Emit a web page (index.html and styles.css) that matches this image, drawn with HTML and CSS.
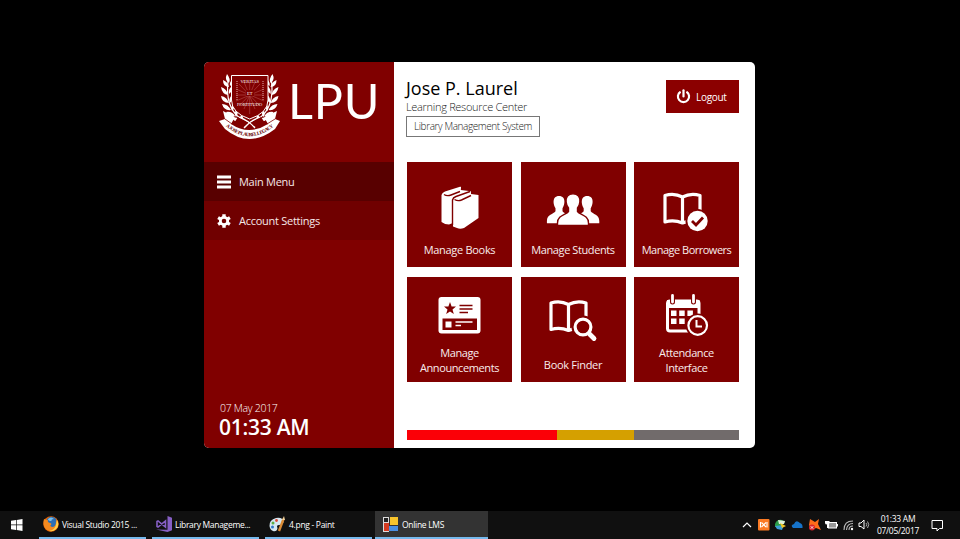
FILE: index.html
```html
<!DOCTYPE html>
<html lang="en">
<head>
<meta charset="utf-8">
<title>Online LMS</title>
<link rel="stylesheet" href="styles.css">
</head>
<body>
<main class="desktop">
  <div class="window">
    <aside class="sidebar">
      <div class="brand">
        <svg class="crest" viewBox="0 0 64 68" width="64" height="68">
          <defs>
            <path id="motto" d="M7 54.500Q31 76 57 54.500"/>
            <g id="branch" fill="#fff">
              <path d="M9 3Q13 8 11 12Q6 9 9 3ZM5 9Q10 11 11 16Q5 16 5 9ZM15 8Q16 12 12 15Q11 11 15 8ZM3 16Q9 18 10 24Q4 23 3 16ZM14 15Q16 19 11 23Q10 18 14 15ZM3 25Q9 26 11 32Q4 32 3 25ZM14 24Q16 28 12 32Q10 28 14 24ZM4 33Q10 33 13 39Q6 40 4 33ZM16 32Q18 36 14 40Q12 36 16 32ZM8 41Q14 40 17 45Q11 47 8 41ZM19 38Q21 42 18 46Q15 42 19 38ZM14 47Q20 45 23 50Q17 52 14 47ZM24 43Q26 47 24 51Q20 47 24 43Z"/>
              <path d="M10 10Q7 36 22 47Q30 50 37 56" fill="none" stroke="#fff" stroke-width="1.200"/>
            </g>
          </defs>
          <use href="#branch"/>
          <use href="#branch" transform="matrix(-1 0 0 1 63.500 0)"/>
          <path d="M13.500 4.500H50V29Q50 42 31.700 48Q13.500 42 13.500 29Z" fill="#800000" stroke="#fff"/>
          <path d="M31.700 11V43M18 24H46M21 13L42 35M42 13L21 35M26 11L37 38M37 11L26 38M18 18L46 30M46 18L18 30" stroke="#c77" stroke-width=".4"/>
          <path d="M19 10V30M45 10V30" stroke="#daa" stroke-dasharray="1 1"/>
          <rect x="28" y="19" width="8" height="6" fill="#800000"/>
          <g class="crest-words">
            <text x="31.700" y="12">VERITAS</text>
            <text x="31.700" y="24">ET</text>
            <text x="31.700" y="35">FORTITUDO</text>
          </g>
          <path d="M5 40L17 46L13 53Q31 65 50 53L46 46L59 40L57 48L62 50L57 58Q31 78 7 58L1 50L7 48Z" fill="#fff"/>
          <path d="M16 52Q31 60 47 52L43 46L31 52L20 46Z" fill="#800000"/>
          <path d="M21 46Q30 49 37 57M42 46Q33 49 26 57" fill="none" stroke="#fff" stroke-width="1.300"/>
          <path d="M7 48L14 53M57 48L49 53" stroke="#800000" stroke-width=".8"/>
          <text class="motto"><textPath href="#motto" startOffset="1" textLength="53">A JOSE P LAUREL LEGACY</textPath></text>
        </svg>
        <span class="brand-name">LPU</span>
      </div>
      <nav class="menu">
        <a class="menu-item active">
          <svg width="14" height="14" viewBox="0 0 14 14"><path d="M1 2H13M1 7H13M1 12H13" stroke="#fff" stroke-width="3" stroke-linecap="square"/></svg>
          <span>Main Menu</span>
        </a>
        <a class="menu-item">
          <svg width="14" height="14" viewBox="0 0 14 14"><g stroke="#fff"><path d="M7 .2V13.800M1.100 3.600L12.900 10.400M1.100 10.400L12.900 3.600" stroke-width="3.400"/><circle cx="7" cy="7" r="3.700" fill="#700000" stroke-width="2.800"/></g></svg>
          <span>Account Settings</span>
        </a>
      </nav>
      <div class="clock">
        <div class="date">07 May 2017</div>
        <div class="time">01:33 AM</div>
      </div>
    </aside>
    <section class="content">
      <header class="header">
        <div class="titles">
          <h1>Jose P. Laurel</h1>
          <h2>Learning Resource Center</h2>
          <div class="system"><span>Library Management System</span></div>
        </div>
        <a class="logout">
          <svg width="15" height="15" viewBox="0 0 15 15"><g fill="none" stroke="#fff" stroke-width="2.200"><path d="M4.600 2.700A5.600 5.600 0 1 0 10.400 2.700"/><path d="M7.500 1.300V7.500" stroke-linecap="round"/></g></svg>
          <span>Logout</span>
        </a>
      </header>
      <div class="tiles">
        <a class="tile">
          <svg viewBox="0 0 106 74" width="106" height="74">
            <path d="M34.500 33Q35 30.500 38 29.500L53 24.800Q54.500 24.500 54 26L53.800 28L62 29Q64.500 28.500 64 30.500L64 32L71.500 33V56L57 66Q53 67.500 50 66L46 64.500V61L42 62.500Q38 62.500 34.500 60Z" fill="#fff"/>
            <path d="M37 32.500Q40 34.500 44 33L53 29.500M47.500 37.500Q51 39.500 54.500 38L64 33.500M45.500 63V38Q46 35.500 49 34.500L63 29.500" fill="none" stroke="#800000" stroke-width="1.400"/>
          </svg>
          <span class="t-books">Manage Books</span>
        </a>
        <a class="tile">
          <svg viewBox="0 0 106 74" width="106" height="74">
            <defs><path id="person" d="M-4.500 13C-7 10 -8 4 -5.500 1C-3-2 3-2 5.500 1C8 4 7 10 4.500 13V16.500C7 20 15.500 20 15.500 28V30.500H-15.500V28C-15.500 20 -7 20 -4.500 16.500Z"/></defs>
            <use href="#person" fill="#fff" transform="translate(39 35) scale(.78 .86)"/>
            <use href="#person" fill="#fff" transform="translate(67.200 35) scale(.78 .86)"/>
            <use href="#person" fill="#fff" stroke="#800000" stroke-width="1.400" transform="translate(53 33)"/>
          </svg>
          <span class="t-students">Manage Students</span>
        </a>
        <a class="tile">
          <svg viewBox="0 0 106 74" width="106" height="74">
            <path d="M48.500 35Q40 30.500 31 33.500V60Q40 57.500 48.500 61Q57 57.500 66 60V33.500Q57 30.500 48.500 35V60" fill="none" stroke="#fff" stroke-width="3.200" stroke-linejoin="round"/>
            <circle cx="63.500" cy="59" r="12" fill="#800000"/><circle cx="63.500" cy="59" r="10.200" fill="#fff"/>
            <path d="M58 59L62 63L69 55.500" fill="none" stroke="#800000" stroke-width="2.800"/>
          </svg>
          <span class="t-borrowers">Manage Borrowers</span>
        </a>
        <a class="tile two-line">
          <svg viewBox="0 0 106 68" width="106" height="68">
            <rect x="31.500" y="20" width="42" height="36.500" rx="3" fill="#fff"/>
            <path d="M43 25L44.600 29.500H49L45.500 32.400L46.800 37L43 34.400L39.200 37L40.500 32.400L37 29.500H41.400ZM35.500 41.500H70V53H35.500Z" fill="#800000"/>
            <path d="M52.500 28.500H65.500M52.500 32H65.500M52.500 35.500H61" stroke="#800000" stroke-width="1.500"/>
            <path d="M38.500 44.500H44.500V50.500H38.500Z" fill="#fff"/><path d="M48.500 45H65.500M48.500 48.500H54" stroke="#fff" stroke-width="1.500"/>
          </svg>
          <span class="t-ann">Manage<br>Announcements</span>
        </a>
        <a class="tile">
          <svg viewBox="0 0 106 74" width="106" height="74">
            <path d="M48.500 27.500Q40 23 31 26V52.500Q40 50 48.500 53.500Q57 50 66 52.500V26Q57 23 48.500 27.500V52.500" fill="none" stroke="#fff" stroke-width="3.200" stroke-linejoin="round"/>
            <circle cx="63" cy="50" r="11.500" fill="#800000"/>
            <circle cx="63" cy="50" r="7.900" fill="#800000" stroke="#fff" stroke-width="3.200"/><path d="M69.500 57L74 61.500" stroke="#fff" stroke-width="4.800" stroke-linecap="round"/>
          </svg>
          <span class="t-finder">Book Finder</span>
        </a>
        <a class="tile two-line">
          <svg viewBox="0 0 106 68" width="106" height="68">
            <rect x="33.500" y="24" width="31.500" height="30" rx="2.500" fill="none" stroke="#fff" stroke-width="3"/>
            <path d="M33 23H65.500V31H33ZM37 33.500H42.500V39H37ZM45.200 33.500H50.700V39H45.200ZM53.400 33.500H58.900V39H53.400ZM37 41.500H42.500V47H37ZM45.200 41.500H50.700V47H45.200Z" fill="#fff"/>
            <path d="M38.500 19.500V25M59.500 19.500V25" stroke="#800000" stroke-width="5" stroke-linecap="round"/><path d="M38.500 18.500V25M59.500 18.500V25" stroke="#fff" stroke-width="2.800" stroke-linecap="round"/>
            <circle cx="63.700" cy="48.500" r="12" fill="#800000"/><circle cx="63.700" cy="48.500" r="9.300" fill="#800000" stroke="#fff" stroke-width="2.200"/>
            <path d="M62.500 43V49.500H68" fill="none" stroke="#fff" stroke-width="2"/>
          </svg>
          <span class="t-att">Attendance<br>Interface</span>
        </a>
      </div>
      <div class="stripe"><i class="red"></i><i class="gold"></i><i class="grey"></i></div>
    </section>
  </div>
</main>
<footer class="taskbar">
  <svg class="start" width="12" height="12" viewBox="0 0 12 12"><path d="M0 1.700L5 1V5.600H0ZM5.700 .9L11.500 0V5.600H5.700ZM0 6.300H5V11L0 10.300ZM5.700 6.300H11.500V12L5.700 11.100Z" fill="#fff"/></svg>
  <div class="tasks">
    <div class="task">
      <svg width="16" height="16" viewBox="0 0 16 16"><circle cx="8" cy="8" r="7.700" fill="#e66000"/><circle cx="8.600" cy="6.400" r="5.600" fill="#2c6fb5"/><path d="M5 3Q8 0 11 3Q8 3 8.500 5Q5 5 5 3Z" fill="#7cc0ea"/><path d="M1 3Q3 4 5 4Q4 6 7 7Q9 7 8 9Q6 10 9 11Q13 11 13 6Q14 3 12 2Q17 6 14.500 12Q10 17 4 14Q-1 10 1 3Z" fill="#f58a1f"/><path d="M14 4Q17 9 13 13Q10 16 6 15Q12 14 13 9Z" fill="#ffd24a"/></svg>
      <span>Visual Studio 2015 ...</span>
    </div>
    <div class="task">
      <svg width="16" height="16" viewBox="0 0 16 16"><path d="M11.500 0L16 1.800V14.200L11.500 16L0 13.500L11.500 13.800Z" fill="#865fc5"/><path d="M1 5.500L2 5L9.500 11V5L2 11L1 10.500Z" fill="none" stroke="#865fc5" stroke-width="1.600"/></svg>
      <span>Library Manageme...</span>
    </div>
    <div class="task">
      <svg width="17" height="16" viewBox="0 0 17 16"><path d="M.5 10Q0 4 7 2Q14 1 14.500 6Q14 9 10 9Q7 9 8.500 12Q8 16 4 15Q1 14 .5 10Z" fill="#d5e7f2"/><circle cx="4" cy="7" r="1.500" fill="#5cac43"/><circle cx="7.500" cy="4.500" r="1.400" fill="#dd4b39"/><circle cx="3.500" cy="11" r="1.500" fill="#3178c6"/><path d="M10 15L14.500 3" stroke="#d98a35" stroke-width="2.400"/><path d="M13 4L15 0L16 4Z" fill="#f2d19b"/></svg>
      <span>4.png - Paint</span>
    </div>
    <div class="task current">
      <svg width="15" height="15" viewBox="0 0 15 15"><path d="M0 0H6V15H0Z" fill="#ddd"/><path d="M1 1H5V5H1Z" fill="#222"/><path d="M1 6H6V14H1Z" fill="#d43b22"/><path d="M7 0H15V8H7Z" fill="#f8c42c"/><path d="M6 9H15V14H6Z" fill="#4b8fe2"/></svg>
      <span>Online LMS</span>
    </div>
  </div>
  <div class="tray">
    <svg width="132" height="14" viewBox="0 0 132 14">
      <path d="M1 9L5 5L9 9" fill="none" stroke="#fff" stroke-width="1.200"/>
      <rect x="16" y="1" width="11.500" height="11.500" rx="1" fill="#fb7a24"/><path d="M19.500 4.500L24 9M24 4.500L19.500 9M18.500 4V9.500M25 4V9.500" stroke="#fff" stroke-width="1.100"/>
      <path d="M33 6Q35 1 40 2L43 4L40 8L33 9Z" fill="#2b9d48"/><path d="M36 2L43 3L42 6L37 6Z" fill="#dff0d8"/><path d="M33 8L42 7L40 12L35 11Z" fill="#3c9ed5"/><path d="M38 5L44 8L40 10Z" fill="#f3c623"/>
      <path d="M51 10Q48 7 52 6Q54 1 58 5Q61 6 60.500 10Z" fill="#1673c9"/>
      <path d="M68 1L73 4L77 1L76 6L79 12L74 10L70 12L67 7Z" fill="#ff6b1a"/><circle cx="70" cy="9.500" r="3" fill="#d9242b"/><path d="M68.700 8.200L71.300 10.800M71.300 8.200L68.700 10.800" stroke="#fff" stroke-width=".8"/>
      <rect x="86.500" y="4.500" width="8" height="5.500" fill="#999" stroke="#fff"/><path d="M95.500 6V8.500" stroke="#fff"/><path d="M83 3H87.500V5Q87.500 6.500 85.200 6.500Q83 6.500 83 5ZM85 6H86V10H85Z" fill="#fff"/>
      <g fill="none" stroke="#bbb" stroke-width="1.100"><path d="M102 12Q102 3 111 3M104.500 12Q105 5.500 111 5.500M107 12Q107 8 111 8"/></g><circle cx="110" cy="11" r="1.200" fill="#fff"/>
      <path d="M117 5H119L122 2V11L119 8.500H117Z" fill="none" stroke="#fff"/><path d="M124 5Q125.500 6.500 124 8.500M125.500 3.500Q128 6.500 125.500 10" fill="none" stroke="#aaa"/>
    </svg>
    <div class="tray-clock"><span>01:33 AM</span><span>07/05/2017</span></div>
    <svg width="13" height="13" viewBox="0 0 13 13"><path d="M1 1.500H11.500V9.500H8.500L6 12V9.500H1Z" fill="none" stroke="#fff"/></svg>
  </div>
</footer>
</body>
</html>
```
FILE: styles.css
```css
* { box-sizing: border-box; }
body {
  margin: 0;
  width: 960px;
  height: 539px;
  display: flex;
  flex-direction: column;
  overflow: hidden;
  background: #000;
  color: #fff;
  font-family: "Open Sans", "Noto Sans", sans-serif;
  white-space: nowrap;
}
svg { display: block; flex: none; }
.desktop { height: 511px; padding: 62px 0 0 204px; }
.window {
  display: flex;
  width: 551px;
  height: 386px;
  border-radius: 5px;
  overflow: hidden;
  background: #fff;
}
.sidebar { width: 190px; display: flex; flex-direction: column; background: #800000; }
.brand { display: flex; height: 100px; padding: 9px 0 0 14px; }
.crest-words { font: 4.5px "Liberation Serif", serif; fill: #fff; text-anchor: middle; }
.motto { font: bold 5px "Liberation Serif", serif; fill: #600; }
.brand-name { margin-left: 6px; font: 48.500px/59px Lato, sans-serif; letter-spacing: .8px; }
.menu-item { display: flex; align-items: center; height: 39px; padding-left: 13px; gap: 8px; background: #700000; font-size: 11px; letter-spacing: -.27px; }
.menu-item.active { background: #580000; }
.menu-item span { color: #f6e8e8; }
.clock { margin-top: auto; padding: 0 0 7px 15px; }
.date { padding-left: 1px; font-size: 10.500px; line-height: 18px; font-weight: 300; letter-spacing: -.3px; }
.time { height: 24px; font-size: 21px; line-height: 21px; font-weight: 600; letter-spacing: -.25px; }
.content { width: 361px; padding: 18px 16px 8px 13px; display: flex; flex-direction: column; }
.header { display: flex; justify-content: space-between; align-items: flex-start; height: 82px; }
.titles { margin: -1px 0 0 -1px; }
h1, h2 { margin: 0; font-weight: 400; color: #000; }
h1 { font-size: 18px; line-height: 19px; letter-spacing: 0; }
h2 { font-size: 11px; line-height: 17px; height: 18px; color: #222; font-weight: 300; letter-spacing: -.3px; }
.system { width: 134px; height: 21px; border: 1px solid #777; color: #222; font-size: 10px; line-height: 19px; padding-left: 7px; font-weight: 300; letter-spacing: -.4px; }
.logout { display: flex; align-items: center; width: 73px; height: 33px; padding-left: 10px; gap: 5px; background: #8b0000; font-size: 10px; letter-spacing: -.3px; }
.tiles { display: grid; grid-template-columns: repeat(3, 105px); grid-auto-rows: 105px; gap: 9.500px 8.500px; }
.tile { display: flex; flex-direction: column; align-items: center; overflow: hidden; background: #800000; font-size: 11px; line-height: 15px; letter-spacing: -.4px; text-align: center; }
.tile span { margin-top: 6px; color: #f9eded; }
.two-line span { margin-top: 0; }
.tile .t-books { letter-spacing: -.3px; }
.tile .t-finder { letter-spacing: -.3px; }
.tile .t-borrowers { letter-spacing: -.5px; }
.stripe { display: flex; height: 10px; margin-top: auto; }
.stripe i { display: block; }
.red { width: 150px; background: #fb0007; }
.gold { width: 77px; background: #d5a000; }
.grey { flex: 1; background: #716b6b; }
.taskbar { display: flex; align-items: stretch; height: 28px; background: #101010; font-size: 8.500px; letter-spacing: -.3px; }
.start { margin: 8px 16px 0 11px; }
.tasks { display: flex; gap: 6px; }
.task { display: flex; align-items: center; gap: 3px; width: 107px; padding-left: 4px; border-bottom: 2px solid #76b9ed; }
.task.current { width: 113px; margin-left: -3px; padding-left: 8px; gap: 4px; background: #333; }
.tray { display: flex; align-items: center; margin-left: auto; padding-right: 16px; }
.tray-clock { display: flex; flex-direction: column; align-items: center; width: 48px; margin-right: 9px; line-height: 12px; }
```
